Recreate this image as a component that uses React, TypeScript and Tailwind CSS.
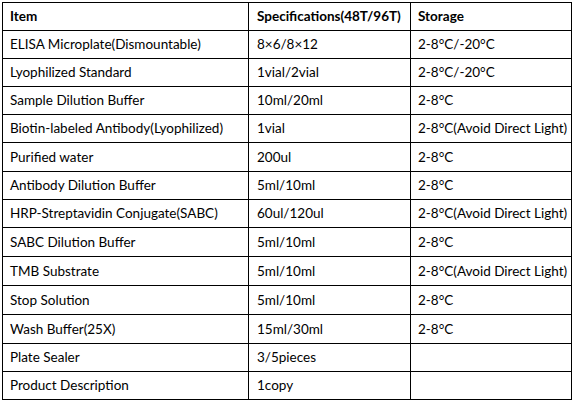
import React from "react";

const rows: [string, string, string][] = [
  ["ELISA Microplate(Dismountable)", "8×6/8×12", "2-8°C/-20°C"],
  ["Lyophilized Standard", "1vial/2vial", "2-8°C/-20°C"],
  ["Sample Dilution Buffer", "10ml/20ml", "2-8°C"],
  ["Biotin-labeled Antibody(Lyophilized)", "1vial", "2-8°C(Avoid Direct Light)"],
  ["Purified water", "200ul", "2-8°C"],
  ["Antibody Dilution Buffer", "5ml/10ml", "2-8°C"],
  ["HRP-Streptavidin Conjugate(SABC)", "60ul/120ul", "2-8°C(Avoid Direct Light)"],
  ["SABC Dilution Buffer", "5ml/10ml", "2-8°C"],
  ["TMB Substrate", "5ml/10ml", "2-8°C(Avoid Direct Light)"],
  ["Stop Solution", "5ml/10ml", "2-8°C"],
  ["Wash Buffer(25X)", "15ml/30ml", "2-8°C"],
  ["Plate Sealer", "3/5pieces", ""],
  ["Product Description", "1copy", ""],
];

const heights = ["h-[28px]", "h-[28px]", "h-[28px]", "h-[28px]", "h-[29px]", "h-[28px]", "h-[28px]", "h-[29px]", "h-[29px]", "h-[29px]", "h-[29px]", "h-[28px]", "h-[28px]"];

export default function App() {
  return (
    <div className="w-[575px] h-[402px] bg-white pt-[2px] pl-[2px]" style={{ fontFamily: "Lato, 'Liberation Sans', sans-serif" }}>
      <table className="border-collapse table-fixed w-[569px] text-[13.5px] text-black">
        <colgroup>
          <col className="w-[246px]" />
          <col className="w-[162px]" />
          <col className="w-[161px]" />
        </colgroup>
        <thead>
          <tr className="h-[28px] font-bold">
            <td className="border border-black px-[7px] py-0 align-middle">Item</td>
            <td className="border border-black px-[8px] py-0 align-middle">Specifications(48T/96T)</td>
            <td className="border border-black px-[7px] py-0 align-middle">Storage</td>
          </tr>
        </thead>
        <tbody>
          {rows.map((r, i) => (
            <tr key={i} className={heights[i]}>
              <td className="border border-black px-[7px] py-0 align-middle whitespace-nowrap">{r[0]}</td>
              <td className="border border-black px-[8px] py-0 align-middle whitespace-nowrap">{r[1]}</td>
              <td className="border border-black px-[7px] py-0 align-middle whitespace-nowrap">{r[2]}</td>
            </tr>
          ))}
        </tbody>
      </table>
    </div>
  );
}
